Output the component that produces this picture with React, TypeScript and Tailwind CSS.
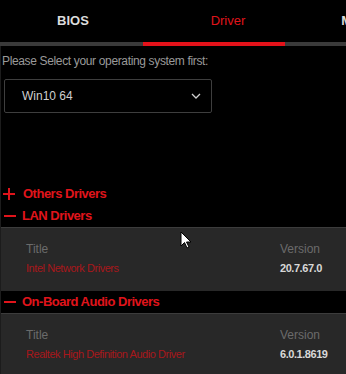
import React from 'react';

const DriverGroup: React.FC<{ name: string; title: string; version: string }> = ({ name, title, version }) => (
  <div>
    <div className="flex items-center h-[22px] bg-black">
      <span className="w-[12px] h-[2px] bg-[#e0141b] ml-[3px]" />
      <span className="ml-[6px] text-[13px] font-bold tracking-[-0.5px] text-[#e0141b]">{name}</span>
    </div>
    <div className="bg-[#282828] border-t border-[#3c3c3c] pt-[12px] pb-[14px] pl-[25px] pr-[12px] text-[11px] tracking-[-0.45px]">
      <div className="flex justify-between text-[#6b6b6b] text-[12px] tracking-normal">
        <span>Title</span>
        <span className="w-[54px]">Version</span>
      </div>
      <div className="flex justify-between mt-[2px]">
        <span className="text-[#a8171b]">{title}</span>
        <span className="w-[54px] font-bold text-[#d8d8d8]">{version}</span>
      </div>
    </div>
  </div>
);

export default function App() {
  return (
    <div className="w-[346px] h-[374px] bg-black overflow-hidden relative" style={{ fontFamily: '"Liberation Sans", Arial, sans-serif' }}>
      <div className="flex h-[42px] items-center text-[13px] font-bold">
        <div className="w-[146px] text-center text-[#dcdcdc]">BIOS</div>
        <div className="w-[164px] text-center text-[#e0141b] font-normal">Driver</div>
        <div className="flex-1 text-right text-[#dcdcdc] -mr-[6px]">M</div>
      </div>
      <div className="flex h-[4px] bg-[#3a3a3a]">
        <div className="ml-[143px] w-[142px] bg-[#e4121a]" />
      </div>
      <div className="border-l border-[#1c1c1c]">
        <div className="pt-[6px] pl-[1px] text-[12px] tracking-[-0.35px] text-[#9a9a9a]">Please Select your operating system first:</div>
        <div className="ml-[3px] mt-[9px] w-[208px] h-[34px] border border-[#3e3e3e] rounded-[2px] flex items-center justify-between pl-[17px] pr-[10px]">
          <span className="text-[12px] text-[#cfcfcf]">Win10 64</span>
          <svg width="10" height="6" viewBox="0 0 10 6" fill="none">
            <path d="M1 1l4 4 4-4" stroke="#cfcfcf" strokeWidth="1.3" />
          </svg>
        </div>
        <div className="h-[70px]" />
        <div className="flex items-center h-[22px]">
          <svg className="ml-[2px]" width="12" height="12" viewBox="0 0 12 12">
            <path d="M6 0v12M0 6h12" stroke="#e0141b" strokeWidth="2" />
          </svg>
          <span className="ml-[8px] text-[13px] font-bold tracking-[-0.5px] text-[#e0141b]">Others Drivers</span>
        </div>
        <DriverGroup name="LAN Drivers" title="Intel Network Drivers" version="20.7.67.0" />
        <DriverGroup name="On-Board Audio Drivers" title="Realtek High Definition Audio Driver" version="6.0.1.8619" />
      </div>
      <svg className="absolute left-[180px] top-[231px]" width="12" height="18" viewBox="0 0 12 18">
        <path d="M1 1v14l3.5-3.5 2.5 5.5 2-1-2.5-5H11z" fill="#fff" stroke="#000" strokeWidth="1" />
      </svg>
    </div>
  );
}
